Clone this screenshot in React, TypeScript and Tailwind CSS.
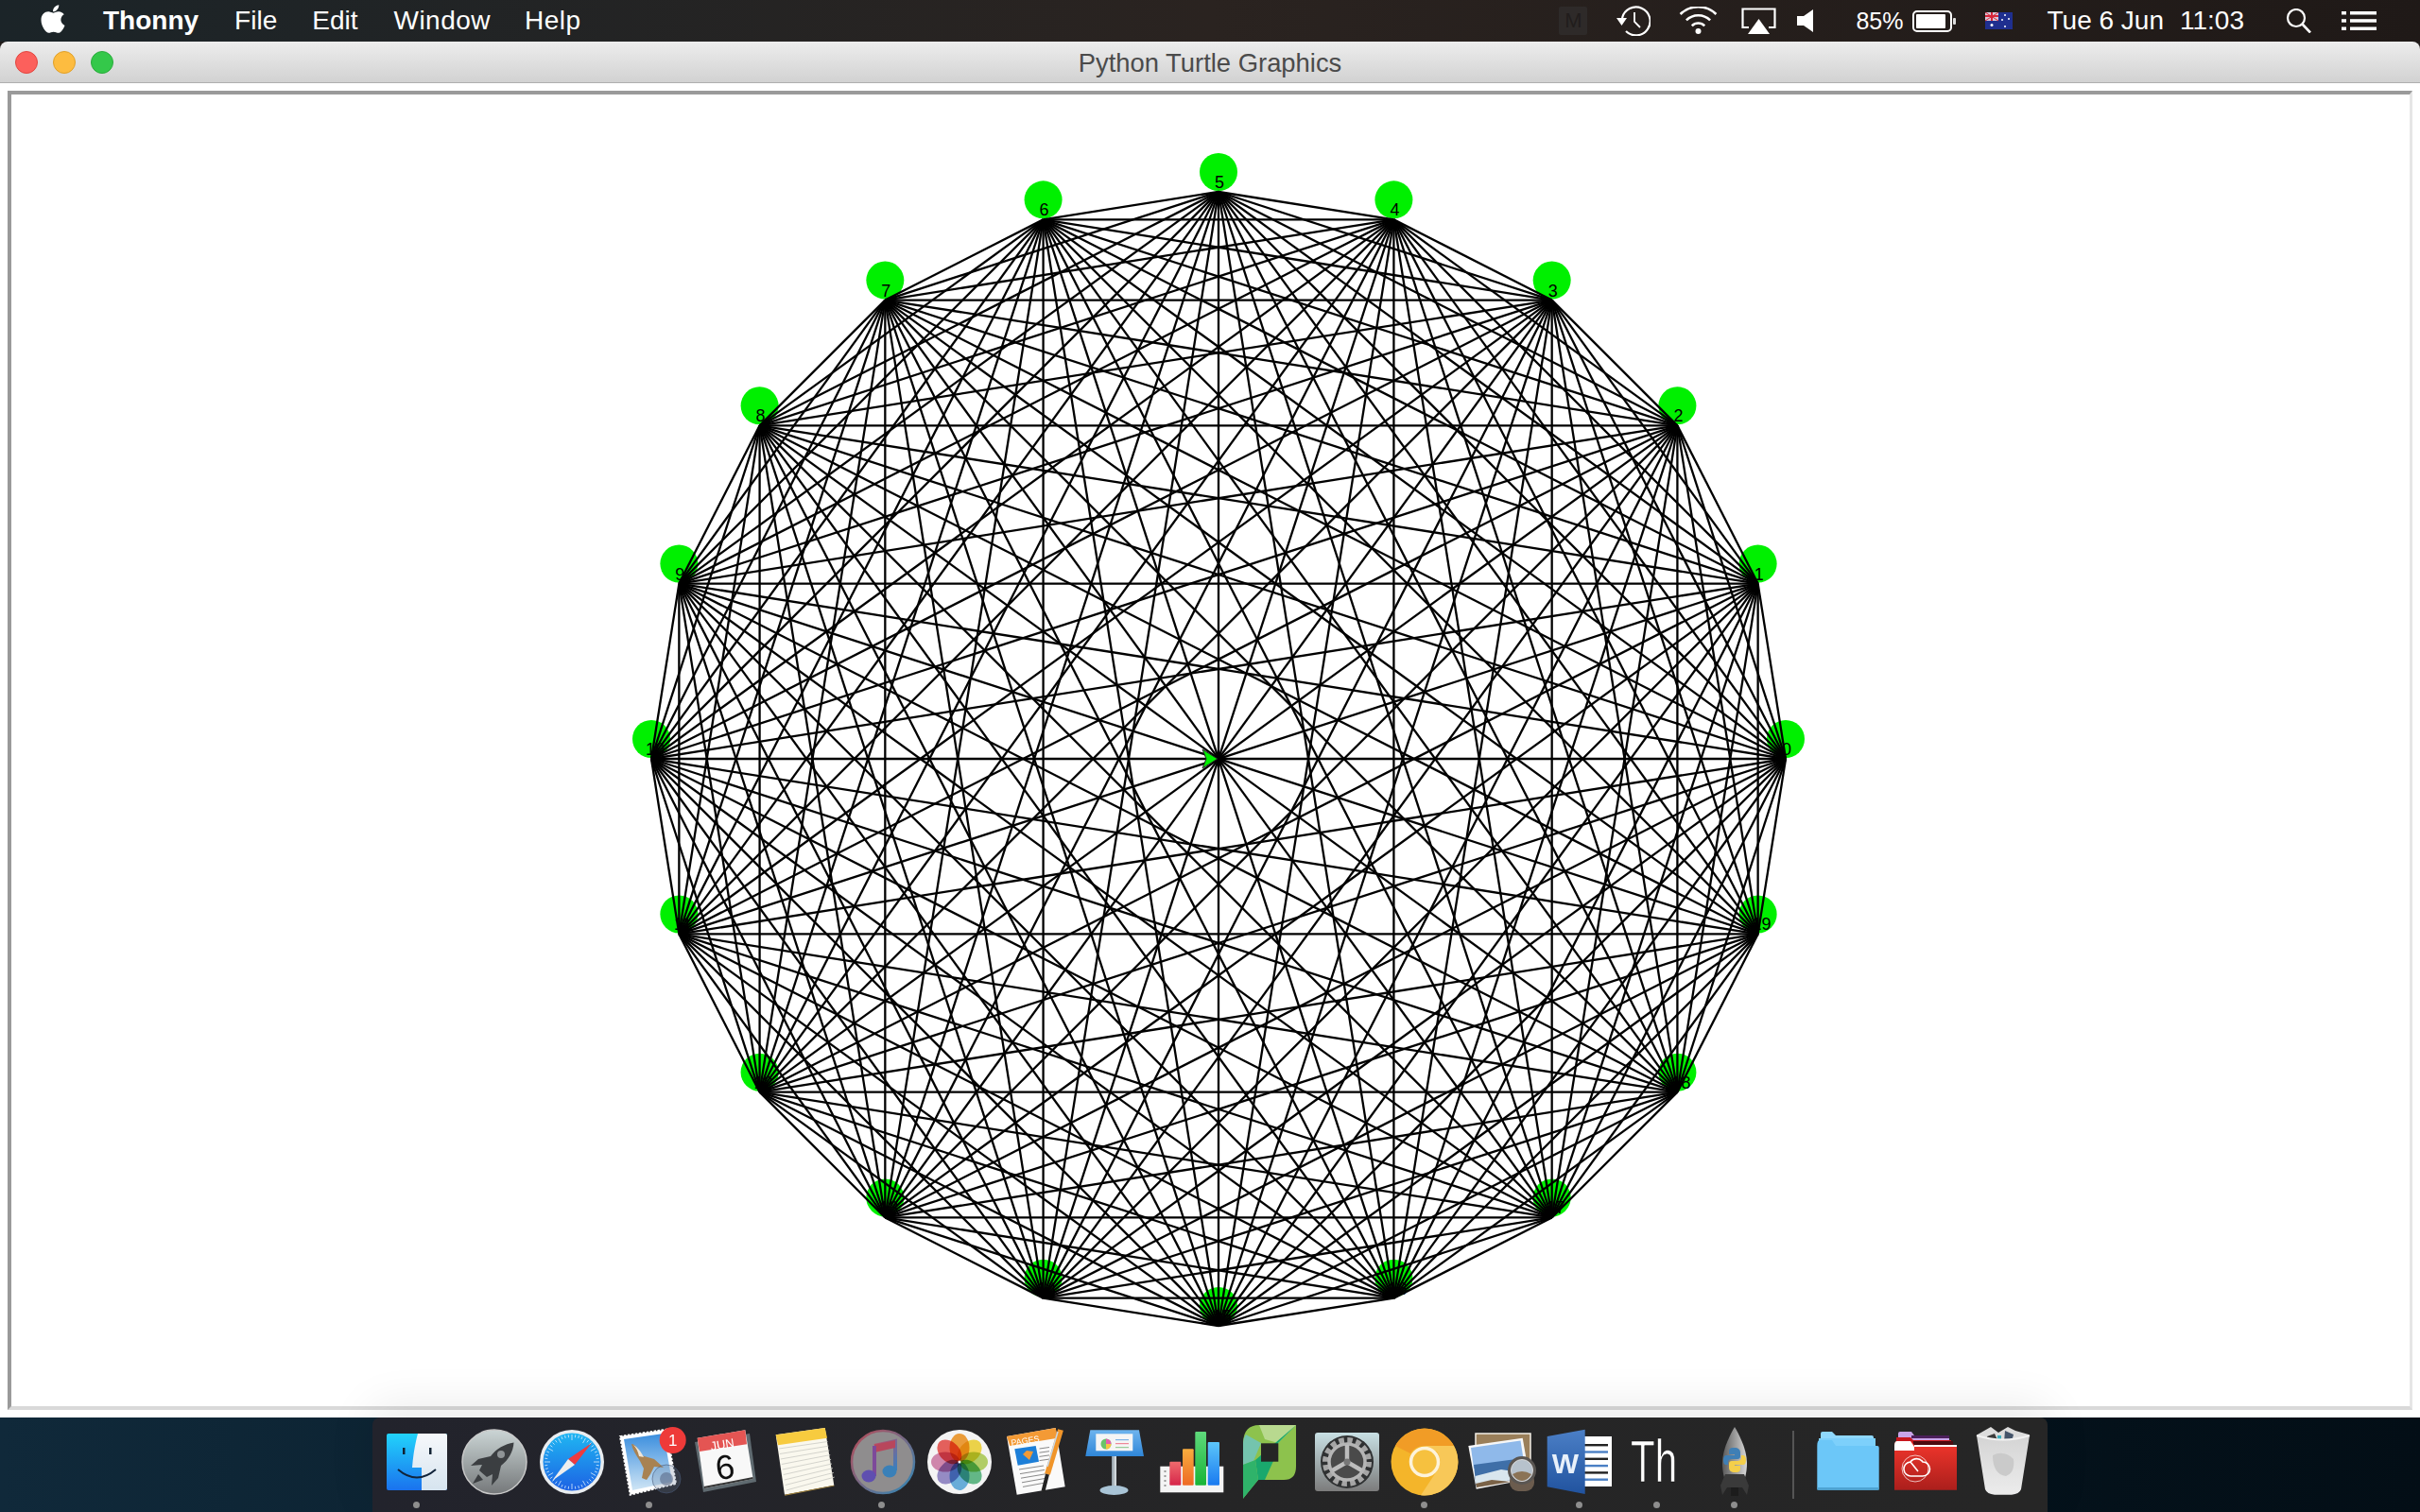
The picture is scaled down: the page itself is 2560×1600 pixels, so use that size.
import React from "react";
import { FaApple } from "react-icons/fa";

// turtle graph: 20 points round a circle, every point joined to every other
const CX = 1289;
const CY = 803;
const R = 600;
const points = Array.from({ length: 20 }, (_, i) => ({
  i,
  x: CX + R * Math.cos((i * Math.PI) / 10),
  y: CY - R * Math.sin((i * Math.PI) / 10),
}));
const edges: [number, number][] = [];
points.forEach((_, a) => {
  for (let b = a + 1; b < 20; b++) edges.push([a, b]);
});

const Grad = ({ id, a, b, x2 = 0, y2 = 1 }: { id: string; a: string; b: string; x2?: number; y2?: number }) => (
  <defs>
    <linearGradient id={id} x1="0" y1="0" x2={x2} y2={y2}>
      <stop offset="0" stopColor={a} />
      <stop offset="1" stopColor={b} />
    </linearGradient>
  </defs>
);

const TurtleGraph = () => (
  <svg viewBox="12 100 2537 1388" className="block h-full w-full">
    {points.map((p) => (
      <circle key={p.i} cx={p.x} cy={p.y - 21} r={20} fill="#00f000" />
    ))}
    {points.map((p) => (
      <text key={p.i} x={p.x + (p.i > 9 ? 4 : 1)} y={p.y - 4} textAnchor="middle" fontSize={18} fill="#000" fontFamily="'Liberation Sans', sans-serif">
        {p.i}
      </text>
    ))}
    {edges.map(([a, b]) => (
      <line key={a + "-" + b} x1={points[a].x} y1={points[a].y} x2={points[b].x} y2={points[b].y} stroke="#000" strokeWidth={2.3} />
    ))}
    <path d="M1288 803 L1272 793 L1276 803 L1272 813 Z" fill="#00f000" stroke="#222" strokeWidth={1} />
  </svg>
);

/* ---------- menu bar icons ---------- */
const TimeMachine = () => (
  <svg width="37" height="32" viewBox="0 0 37 32" fill="none" stroke="#fff" strokeWidth="2.2">
    <path d="M7 13 A15 15 0 1 1 11 27" />
    <path d="M1 13 H12 L6.5 21 Z" fill="#fff" stroke="none" />
    <path d="M20 7 V17 L26 23" strokeWidth="1.8" />
  </svg>
);

const Wifi = () => (
  <svg width="41" height="30" viewBox="0 0 41 30" fill="none" stroke="#fff" strokeWidth="2.6">
    <path d="M1.6 8 A27 27 0 0 1 39.4 8" />
    <path d="M7.9 14.4 A18 18 0 0 1 33.1 14.4" />
    <path d="M13.8 20.3 A9.5 9.5 0 0 1 27.2 20.3" />
    <circle cx="20.5" cy="26" r="3" fill="#fff" stroke="none" />
  </svg>
);

const Airplay = () => (
  <svg width="37" height="28" viewBox="0 0 37 28" fill="none">
    <path d="M8 21 H1.5 V1.5 H35.5 V21 H29" stroke="#fff" strokeWidth="2.2" />
    <path d="M18.5 12 L30 28 H7 Z" fill="#fff" />
  </svg>
);

const Volume = () => (
  <svg width="18" height="24" viewBox="0 0 18 24">
    <path d="M0 7 H7 L17 0 V24 L7 17 H0 Z" fill="#fff" />
  </svg>
);

const Battery = () => (
  <svg width="46" height="23" viewBox="0 0 46 23" fill="none">
    <rect x="1" y="1" width="40" height="21" rx="4" stroke="#fff" strokeWidth="2" />
    <rect x="4" y="4" width="31" height="15" rx="1" fill="#fff" />
    <rect x="43" y="8" width="3" height="7" rx="1" fill="#ddd" />
  </svg>
);

const Flag = () => (
  <svg width="29" height="18" viewBox="0 0 29 18">
    <rect width="29" height="18" fill="#1f2f8f" />
    <rect width="14" height="9" fill="#d9c8d8" />
    <path d="M0 4 H14 M7 0 V9" stroke="#d8263a" strokeWidth="2" />
    <path d="M0 0 L14 9 M14 0 L0 9" stroke="#d8263a" strokeWidth="1" />
    <circle cx="7" cy="13.5" r="1.5" fill="#fff" />
    <circle cx="21" cy="3" r="1" fill="#fff" />
    <circle cx="25" cy="7" r="1" fill="#fff" />
    <circle cx="18" cy="8" r="1" fill="#fff" />
    <circle cx="21" cy="15" r="1" fill="#fff" />
  </svg>
);

const Search = () => (
  <svg width="31" height="26" viewBox="0 0 31 26" fill="none" stroke="#fff" strokeWidth="2.2">
    <circle cx="12" cy="10" r="9" />
    <path d="M18.5 16.5 L27 25.5" strokeWidth="2.6" />
  </svg>
);

const ListIcon = () => (
  <svg width="37" height="20" viewBox="0 0 37 20" fill="#fff">
    <rect y="0" width="5" height="3.5" />
    <rect x="9" y="0" width="28" height="3.5" />
    <rect y="8.2" width="5" height="3.5" />
    <rect x="9" y="8.2" width="28" height="3.5" />
    <rect y="16.5" width="5" height="3.5" />
    <rect x="9" y="16.5" width="28" height="3.5" />
  </svg>
);

const MenuBar = () => (
  <div className="flex h-[44px] shrink-0 items-center bg-gradient-to-r from-[#1b2428] via-[#2a2320] to-[#1f1917] pl-[42px] pr-[46px] text-[28px] leading-none text-white">
    <FaApple className="mb-[4px] h-[34px] w-[28px]" />
    <span className="ml-[39px] font-bold">Thonny</span>
    <span className="ml-[38px]">File</span>
    <span className="ml-[37px]">Edit</span>
    <span className="ml-[38px] tracking-[0.5px]">Window</span>
    <span className="ml-[36px] tracking-[0.5px]">Help</span>

    <div className="ml-auto flex h-[30px] w-[30px] items-center justify-center rounded-[2px] bg-[#2e2a29] text-[22px] text-[#211d1c]">M</div>
    <div className="ml-[30px]"><TimeMachine /></div>
    <div className="ml-[30px]"><Wifi /></div>
    <div className="ml-[25px]"><Airplay /></div>
    <div className="ml-[22px]"><Volume /></div>
    <span className="ml-[44px] text-[25px]">85%</span>
    <div className="ml-[9px]"><Battery /></div>
    <div className="ml-[31px]"><Flag /></div>
    <span className="ml-[37px]">Tue 6 Jun</span>
    <span className="ml-[17px]">11:03</span>
    <div className="ml-[43px]"><Search /></div>
    <div className="ml-[29px]"><ListIcon /></div>
  </div>
);

/* ---------- dock icons, all in an 82 x 88 box ---------- */
const Icon = ({ children }: { children: React.ReactNode }) => (
  <svg width="82" height="88" viewBox="0 0 82 88" className="block">
    {children}
  </svg>
);

const Finder = () => (
  <Icon>
    <Grad id="fa" a="#22d3fb" b="#1a72ee" />
    <Grad id="fb" a="#f6f8fb" b="#d6e4ef" />
    <rect x="9" y="17" width="64" height="60" rx="2" fill="url(#fa)" />
    <path d="M42 17 H71 Q73 17 73 19 V75 Q73 77 71 77 H46 V53 H36 C37 40 39 28 42 17 Z" fill="url(#fb)" />
    <rect x="26" y="32" width="2.5" height="7" fill="#123" />
    <rect x="54" y="32" width="2.5" height="7" fill="#123" />
    <path d="M21 55 Q41 72 61 55" fill="none" stroke="#10233a" strokeWidth="2" />
  </Icon>
);

const Launchpad = () => (
  <Icon>
    <Grad id="la" a="#cbd5d5" b="#75787a" />
    <circle cx="41" cy="47" r="34" fill="url(#la)" stroke="#c9c9c9" strokeWidth="1.5" />
    <path d="M61.5 26.5 C52 28 43 33 37 41 L24 44 L16 51 L28 50 L25 56 L33 63 L39 60 L38 72 L45 64 L48 51 C56 45 61 36 61.5 26.5 Z" fill="#3b3e41" />
    <path d="M24 60 L18 70 L29 66 Z" fill="#3b3e41" />
    <circle cx="48" cy="39" r="4" fill="#8f9496" />
  </Icon>
);

const Safari = () => (
  <Icon>
    <Grad id="sa" a="#1fb6f2" b="#1d62e4" />
    <circle cx="41" cy="47" r="34" fill="#e9edf0" />
    <circle cx="41" cy="47" r="30.5" fill="url(#sa)" />
    {Array.from({ length: 48 }, (_, i) => {
      const t = (i * Math.PI) / 24;
      const inner = i % 4 === 0 ? 23 : 26;
      return (
        <line key={i} x1={41 + inner * Math.cos(t)} y1={47 + inner * Math.sin(t)} x2={41 + 29 * Math.cos(t)} y2={47 + 29 * Math.sin(t)} stroke="#d8eefc" strokeWidth="0.8" />
      );
    })}
    <path d="M62 27 L44 50 L37 44 Z" fill="#ee3b3f" />
    <path d="M20 67 L37 44 L44 50 Z" fill="#eeeeee" />
  </Icon>
);

const Mail = () => (
  <Icon>
    <path d="M10 20 L59 12.7 L69 70 L20.7 81.7 Z" fill="#fff" stroke="#fff" strokeWidth="2" strokeDasharray="2.5 1.5" />
    <Grad id="ma" a="#3a8ede" b="#cfe5f5" />
    <path d="M14 23 L56 17 L65 68 L23 77 Z" fill="url(#ma)" />
    <path d="M22 28 C26 28 30 34 32 40 L46 44 L56 53 L46 52 L42 60 L38 66 L33 64 L35 54 L31 46 C27 40 23 34 22 28 Z" fill="#a88252" />
    <path d="M24 29 C27 32 29 36 30 41 L35 42 C32 36 28 31 24 29 Z" fill="#efe6d8" />
    <circle cx="59" cy="65" r="15" fill="#6d7f9c" fillOpacity="0.25" stroke="#4a5a78" strokeOpacity="0.6" strokeWidth="1" />
    <circle cx="59" cy="65" r="7" fill="#5a6a88" fillOpacity="0.6" />
    <circle cx="65.7" cy="24" r="14" fill="#ee3a39" />
    <text x="65.7" y="30" textAnchor="middle" fontSize="17" fill="#fff" fontFamily="'Liberation Sans', sans-serif">1</text>
  </Icon>
);

const Calendar = () => (
  <Icon>
    <path d="M7 26 L65 17 L72 68 L16 79 Z" fill="#5f6a70" />
    <path d="M9.7 21.7 L60.3 13.3 L68.7 65 L17 75 Z" fill="#f8f8f8" />
    <path d="M17 75 L68.7 65 L68.4 63 L16.7 73 Z" fill="#333" />
    <path d="M9.7 21.7 L60.3 13.3 L62 28.3 L12 36 Z" fill="#e45553" />
    <text x="36" y="33" textAnchor="middle" fontSize="13" fill="#fff" transform="rotate(-9 36 28)" fontFamily="'Liberation Sans', sans-serif">JUN</text>
    <text x="39" y="65" textAnchor="middle" fontSize="36" fill="#111" transform="rotate(-8 39 53)" fontFamily="'Liberation Sans', sans-serif">6</text>
  </Icon>
);

const Notes = () => (
  <Icon>
    <path d="M10.7 18.3 L62.7 11 L72.3 71.7 L20 81.7 Z" fill="#faf8ee" />
    {[0, 1, 2, 3, 4, 5, 6, 7, 8].map((i) => (
      <line key={i} x1={14 + i * 0.95} y1={33 + i * 5.5} x2={65.5 + i * 0.9} y2={25.5 + i * 4.7} stroke="#cfcfc8" strokeWidth="0.9" />
    ))}
    <path d="M10.7 18.3 L62.7 11 L65 21.7 L13 29.3 Z" fill="#f7cb3f" />
    <path d="M20 81.7 L72.3 71.7 L72.5 72.6 L20.2 82.7 Z" fill="#a8873b" />
  </Icon>
);

const Itunes = () => (
  <Icon>
    <Grad id="ia" a="#b84a55" b="#2f89b8" x2={1} y2={1} />
    <Grad id="ib" a="#c64a60" b="#3a7fc0" x2={1} y2={1} />
    <circle cx="42" cy="47" r="33" fill="#8f8d8e" stroke="url(#ia)" strokeWidth="2.5" />
    <path d="M33 30 L55 25 V56" fill="none" stroke="url(#ib)" strokeWidth="4" />
    <path d="M33 29 L55 24 V32 L33 37 Z" fill="#b8465c" />
    <path d="M33 30 V62" stroke="#7d4a9a" strokeWidth="4" />
    <ellipse cx="27" cy="62" rx="7.5" ry="6.5" fill="#5f4fb0" />
    <ellipse cx="49" cy="57" rx="7.5" ry="6.5" fill="#3a80b8" />
  </Icon>
);

const Photos = () => {
  const petals = ["#f5a33c", "#f6dc4c", "#b9d76b", "#67bf8c", "#6db4e2", "#9c91cd", "#d98cb3", "#ee6460"];
  return (
    <Icon>
      <circle cx="41" cy="47" r="34" fill="#f4f4f4" />
      {petals.map((c, i) => (
        <ellipse key={c} cx="41" cy="32" rx="10.5" ry="15" fill={c} className="mix-blend-multiply" transform={`rotate(${i * 45} 41 47)`} />
      ))}
      <circle cx="41" cy="47" r="1.5" fill="#fff" />
    </Icon>
  );
};

const Pages = () => (
  <Icon>
    <path d="M9 20 L60.7 11 L70.7 73.3 L19.7 81.7 Z" fill="#fafafa" />
    <path d="M9 20 L60.7 11 L63 21.7 L12.3 30 Z" fill="#f39a35" />
    <text x="14" y="30" fontSize="9" fill="#fff" transform="rotate(-9 14 30)" fontFamily="'Liberation Sans', sans-serif">PAGES</text>
    <path d="M17.3 33.3 L39.7 30 L43 46.7 L20.7 50.7 Z" fill="#1d7fd8" />
    <path d="M30 35 L37 36 L33 45 L26 39 Z" fill="#f39a35" />
    {[0, 1, 2, 3, 4].map((i) => (
      <line key={i} x1={22 + i} y1={55 + i * 4.6} x2={48 + i} y2={51 + i * 4.4} stroke="#8a8a8a" strokeWidth="1" />
    ))}
    {[0, 1, 2, 3].map((i) => (
      <line key={i} x1={43.5} y1={33 + i * 4.2} x2={54} y2={31.5 + i * 4.2} stroke="#8a8a8a" strokeWidth="1" />
    ))}
    <line x1="66" y1="13" x2="52" y2="60" stroke="#f0952a" strokeWidth="6" />
    <line x1="63" y1="15" x2="52" y2="52" stroke="#c8d8e8" strokeWidth="1.5" />
    <line x1="52" y1="60" x2="47.5" y2="78" stroke="#222" strokeWidth="4" />
  </Icon>
);

const Keynote = () => (
  <Icon>
    <Grad id="ka" a="#6eb4ee" b="#2f86d8" />
    <Grad id="kb" a="#8d9aa3" b="#dfe5e8" x2={1} y2={0} />
    <path d="M15.3 13.3 H67 L72 41 H10.3 Z" fill="url(#ka)" />
    <rect x="21.3" y="17.3" width="39" height="18" fill="#f5f5f5" />
    <circle cx="32" cy="28" r="5.5" fill="#6ac46a" />
    <path d="M32 28 V22.5 A5.5 5.5 0 0 1 37.5 28 Z" fill="#e45fb0" />
    <path d="M32 28 H37.5 A5.5 5.5 0 0 1 32 33.5 Z" fill="#f5c542" />
    <rect x="42" y="23" width="14" height="1.2" fill="#7fb2e5" />
    <rect x="42" y="27" width="14" height="1.2" fill="#e89" />
    <rect x="42" y="31" width="14" height="1.2" fill="#9c9" />
    <rect x="38" y="41" width="5" height="35" fill="url(#kb)" />
    <ellipse cx="40.5" cy="77" rx="15" ry="5" fill="#a9c4d6" />
  </Icon>
);

const NumbersIcon = () => (
  <Icon>
    <Grad id="na" a="#ef6b6d" b="#d6264a" />
    <Grad id="nb" a="#f9ad3e" b="#ee6a25" />
    <Grad id="nc" a="#5fd97b" b="#17b437" />
    <Grad id="nd" a="#5cc6fa" b="#1a7af0" />
    <rect x="7.3" y="51.7" width="67" height="27.6" fill="#f4f4f4" />
    <rect x="17.3" y="46.7" width="12" height="25" rx="1" fill="url(#na)" />
    <rect x="31" y="33.3" width="11.7" height="38.4" rx="1" fill="url(#nb)" />
    <rect x="44.3" y="15" width="11.7" height="56.7" rx="1" fill="url(#nc)" />
    <rect x="57.7" y="26" width="12.3" height="45.7" rx="1" fill="url(#nd)" />
    {[0, 1, 2, 3].map((i) => (
      <rect key={i} x="11.5" y={56 + i * 5} width="2" height="2" fill="#999" />
    ))}
  </Icon>
);

const Paper = () => (
  <Icon>
    <path d="M13 28 Q13 8 30 8 L69 8 L69 52 Q69 66 56 66 L29 66 L13 85.7 Z" fill="#8dc24d" />
    <path d="M30 8 L69 8 L50 27 L36 23 Z" fill="#b8d98f" />
    <path d="M13 28 Q13 22 16 18 L32 27 L24 46 L13 50 Z" fill="#74c4ae" />
    <path d="M69 8 L50 27 L45 46 L36 66 L29 66 L26 45 Z" fill="#1aa86d" />
    <path d="M13 50 L26 45 L29 66 L13 85.7 Z" fill="#2fb36a" />
    <rect x="32" y="27.3" width="18.3" height="19.4" fill="#252525" />
  </Icon>
);

const SystemPrefs = () => (
  <Icon>
    <Grad id="pa" a="#c8e0e4" b="#7c7c7c" />
    <rect x="7" y="16" width="68" height="62" rx="3" fill="url(#pa)" />
    <circle cx="41" cy="47" r="28" fill="#2f3132" />
    <circle cx="41" cy="47" r="23" fill="none" stroke="#a5a5a5" strokeWidth="6" strokeDasharray="5.5 3.5" />
    <circle cx="41" cy="47" r="19" fill="#4a4a4a" stroke="#b5b5b5" strokeWidth="3.5" />
    <path d="M41 47 L41 29 M41 47 L25.5 56 M41 47 L56.5 56" stroke="#bdbdbd" strokeWidth="4.5" />
    <circle cx="41" cy="47" r="3.5" fill="#777" />
  </Icon>
);

const Canary = () => (
  <Icon>
    <circle cx="41" cy="47" r="35.5" fill="#f4b52a" />
    <path d="M10 30 A35.5 35.5 0 0 1 72 30 H41 A17 17 0 0 0 26 38 Z" fill="#f19c26" />
    <path d="M72 30 A35.5 35.5 0 0 1 37 82.3 L55 55 A17 17 0 0 0 54 36 L41 30 Z" fill="#f8c858" />
    <circle cx="41" cy="47" r="14.5" fill="#f6c13f" stroke="#fdf3da" strokeWidth="3.5" />
  </Icon>
);

const Preview = () => (
  <Icon>
    <rect x="13" y="17" width="58" height="34" fill="#9a7f5a" stroke="#f4f0e8" strokeWidth="1.5" />
    <path d="M5.3 30 L62.7 21.7 L70.3 65 L13.7 75.7 Z" fill="#f7f7f7" />
    <path d="M8 32 L60.5 24.5 L64 47 L11 54 Z" fill="#8fb9ea" />
    <path d="M11 50 L63.5 43 L67.5 63 L13.5 73 Z" fill="#3f6fa8" />
    <path d="M12.5 62 L40 55 L66 59 L67.5 63 L13.5 73 Z" fill="#d9e6ee" />
    <path d="M13 70 L30 66 L50 68 L14 74 Z" fill="#7a6247" />
    <rect x="49" y="58" width="26" height="20" rx="9" fill="#6b5c4e" />
    <circle cx="62" cy="56" r="15" fill="#5a5652" />
    <circle cx="62" cy="56" r="11.5" fill="#b7c2cc" stroke="#d8d8d8" strokeWidth="1" />
    <path d="M52 60 Q62 54 72 60 Q68 67 62 67 Q56 67 52 60 Z" fill="#8b7356" />
  </Icon>
);

const Word = () => (
  <Icon>
    <Grad id="wa" a="#4b7fc6" b="#21539f" />
    <rect x="46" y="20" width="29" height="53" fill="#fff" />
    {[0, 1, 2, 3, 4, 5].map((i) => (
      <rect key={i} x="46" y={28 + i * 7.3} width="25" height="2.4" fill={i % 2 === 0 ? "#222" : "#4a7fc4"} />
    ))}
    <path d="M6.7 20 L46.7 12.7 V81 L6.7 73.3 Z" fill="url(#wa)" />
    <text x="26" y="59" textAnchor="middle" fontSize="30" fontWeight="700" fill="#e8f0fa" fontFamily="'Liberation Sans', sans-serif">W</text>
  </Icon>
);

const Thonny = () => (
  <Icon>
    <text fontSize="62" fill="#fff" stroke="#000" strokeWidth="0.6" transform="translate(13 68) scale(0.68 1)" fontFamily="'Liberation Sans', sans-serif">
      Th
    </text>
  </Icon>
);

const PythonRocket = () => (
  <Icon>
    <Grad id="ra" a="#5a5a5a" b="#d8d8d8" x2={1} y2={0} />
    <path d="M41 10 C48 22 54 36 54 48 C54 58 52 64 50 70 H32 C30 64 28 58 28 48 C28 36 34 22 41 10 Z" fill="url(#ra)" />
    <path d="M31 60 L26 72 L28 82 L33 74 H49 L54 82 L56 72 L51 60 Z" fill="#3a3a3a" />
    <path d="M37 74 H45 V83 H37 Z" fill="#1c1c1c" />
    <path d="M40.5 32 C35 32 35 34 35 37 V39 H41 V40 H32 C30 40 29 42 29 45 C29 48 30 50 32 50 H34 V47 C34 45 36 44 38 44 H44 C46 44 47 43 47 41 V37 C47 34 45 32 40.5 32 Z" fill="#3f7fb5" />
    <path d="M41.5 58 C47 58 47 56 47 53 V51 H41 V50 H50 C52 50 53 48 53 45 C53 42 52 40 50 40 H48 V43 C48 45 46 46 44 46 H38 C36 46 35 47 35 49 V53 C35 56 37 58 41.5 58 Z" fill="#f4cf4a" />
  </Icon>
);

const BlueFolder = () => (
  <Icon>
    <path d="M12 17 Q12 15 14 15 H24 L28 19 H66 Q68 19 68 21 V30 H12 Z" fill="#8fd8fd" />
    <path d="M10 22 H70 V30 H10 Z" fill="#7dd0fb" />
    <path d="M8.3 30 Q8.3 24 11 24 H24 L28 30 H72 Q73.7 30 73.7 32 V75 Q73.7 76.7 72 76.7 H10 Q8.3 76.7 8.3 75 Z" fill="#6cc7f8" />
    <rect x="8.3" y="74" width="65.4" height="2.7" fill="#4ea3d2" />
  </Icon>
);

const CcFolder = () => (
  <Icon>
    <Grad id="ca" a="#f2362c" b="#ab1f1c" />
    <path d="M12 17 Q12 15 14 15 H26 L29 19 H66 V24 H12 Z" fill="#c9a4e8" />
    <rect x="26" y="19" width="40" height="3" fill="#4b1f5b" />
    <path d="M10 21 H25 L28 24 H68 V29 H10 Z" fill="#c8171d" />
    <rect x="28" y="25" width="42" height="4" fill="#4c0a10" />
    <path d="M8 30 Q8 25 11 25 H25 L29 29 H74 V76.7 H8 Z" fill="url(#ca)" />
    <path d="M8 35 V30 Q8 25 11 25 H25 L29 31 V35 Z" fill="#fff" />
    <rect x="29" y="29" width="45" height="2" fill="#fff" />
    <g fill="none" stroke="#fff" strokeWidth="1">
      <circle cx="30" cy="54" r="14" strokeOpacity="0.7" />
      <path d="M26 62 H38 A7.5 7.5 0 0 0 38 47 A8 8 0 0 0 25 47 L33 57 M26 62 A7.5 7.5 0 0 1 25 47" strokeWidth="1.6" />
    </g>
  </Icon>
);

const Trash = () => (
  <Icon>
    <Grad id="ta" a="#d4d4d4" b="#ececec" />
    <path d="M14 18 L28 10 L36 16 L46 10 L54 14 L68 18 V26 H14 Z" fill="#dcdcdc" />
    <path d="M24 20 L32 17 L36 26 L25 26 Z" fill="#3a3a3a" />
    <path d="M43 14 L52 18 L50 26 L42 26 Z" fill="#44546a" />
    <rect x="35" y="19" width="4" height="5" fill="#3cb0c0" />
    <path d="M13 19 Q41 28 69 19 L60 76 Q58 81 50 81.7 H32 Q24 81 22 76 Z" fill="url(#ta)" />
    <path d="M13 19 Q41 28 69 19" fill="none" stroke="#f2f2f2" strokeWidth="2" />
    <path d="M30 40 Q42 34 52 44 Q54 58 44 62 Q30 60 30 40 Z" fill="#cacaca" />
  </Icon>
);

const DockCell = ({ children, dot }: { children: React.ReactNode; dot?: boolean }) => (
  <div className="flex w-[82px] flex-col items-center">
    {children}
    {dot && <div className="mr-[2px] mt-px h-[7px] w-[7px] rounded-full bg-[#8e8e8e]" />}
  </div>
);

const Dock = () => (
  <div className="flex h-[100px] shrink-0 bg-gradient-to-r from-[#10293a] via-[#071a26] to-[#030e16]">
    <div className="relative z-10 ml-[394px] flex h-full w-[1772px] rounded-t-[8px] bg-gradient-to-r from-[#22232c] via-[#252526] to-[#262626] px-[6px] shadow-[0_-10px_50px_rgba(0,0,0,0.09)]">
      <DockCell dot><Finder /></DockCell>
      <DockCell><Launchpad /></DockCell>
      <DockCell><Safari /></DockCell>
      <DockCell dot><Mail /></DockCell>
      <DockCell><Calendar /></DockCell>
      <DockCell><Notes /></DockCell>
      <DockCell dot><Itunes /></DockCell>
      <DockCell><Photos /></DockCell>
      <DockCell><Pages /></DockCell>
      <DockCell><Keynote /></DockCell>
      <DockCell><NumbersIcon /></DockCell>
      <DockCell><Paper /></DockCell>
      <DockCell><SystemPrefs /></DockCell>
      <DockCell dot><Canary /></DockCell>
      <DockCell><Preview /></DockCell>
      <DockCell dot><Word /></DockCell>
      <DockCell dot><Thonny /></DockCell>
      <DockCell dot><PythonRocket /></DockCell>
      <div className="ml-[20px] mr-[16px] mt-[14px] h-[72px] w-[2px] bg-[#555]" />
      <DockCell><BlueFolder /></DockCell>
      <DockCell><CcFolder /></DockCell>
      <DockCell><Trash /></DockCell>
    </div>
  </div>
);

export default function App() {
  return (
    <div className="flex h-[1600px] w-[2560px] flex-col overflow-hidden bg-[#1f1a18] font-['Liberation_Sans',sans-serif]">
      <MenuBar />

      <div className="flex min-h-0 flex-1 flex-col">
        {/* title bar */}
        <div className="flex h-[44px] shrink-0 items-center rounded-t-[8px] border-b border-[#aeaeae] bg-gradient-to-b from-[#ededed] to-[#d2d2d2]">
          <div className="flex flex-1 gap-[16px] pl-[16px]">
            <div className="h-[24px] w-[24px] rounded-full border border-[#e2463f] bg-[#fc605c]" />
            <div className="h-[24px] w-[24px] rounded-full border border-[#e0a028] bg-[#fdbc40]" />
            <div className="h-[24px] w-[24px] rounded-full border border-[#2aab3c] bg-[#34c84a]" />
          </div>
          <div className="pt-[3px] text-[27.4px] leading-none text-[#4b4b4b]">Python Turtle Graphics</div>
          <div className="flex-1 pl-[16px]" />
        </div>

        {/* turtle canvas */}
        <div className="min-h-0 flex-1 bg-white px-[8px] py-[8px]">
          <div className="h-full border-b-4 border-l-4 border-r-[3px] border-t-4 border-b-[#d9d9d9] border-l-[#9a9a9a] border-r-[#e6e6e6] border-t-[#9a9a9a] bg-white">
            <TurtleGraph />
          </div>
        </div>
      </div>

      <Dock />
    </div>
  );
}
